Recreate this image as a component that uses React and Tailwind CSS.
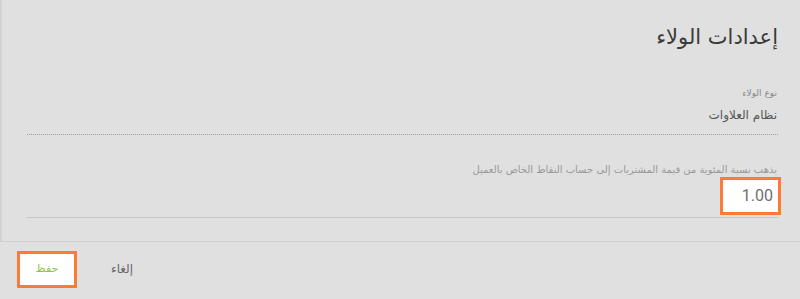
import React from 'react'

const font = { fontFamily: '"DejaVu Sans", "Noto Sans", sans-serif' }

export default function App() {
  return (
    <div dir="rtl" className="w-[800px] h-[299px] bg-[#e0e0e0] text-[#333] flex flex-col overflow-hidden" style={font}>
      {/* Form body */}
      <div className="h-[241px] border-l-2 border-[#d2d2d2] pr-[22px] pl-[25px] pt-[22px]">
        <h2 className="text-[21px] leading-[30px] text-[#3a3a3a] mb-[34px]">إعدادات الولاء</h2>

        <div className="pr-[1px] pb-[9px] border-b border-dotted border-[#9a9a9a]">
          <div className="text-[9px] leading-[14px] text-[#888]">نوع الولاء</div>
          <div className="text-[12px] leading-[20px] text-[#555] mt-[5px]">نظام العلاوات</div>
        </div>

        <div className="mt-[29px] pr-[1px] border-b border-[#c4c4c4] pb-[2px]">
          <div className="text-[10px] leading-[12px] text-[#999]">يذهب نسبة المئوية من قيمة المشتريات إلى حساب النقاط الخاص بالعميل</div>
          <div className="flex mt-[1px]">
            <div
              className="w-[61px] h-[38px] -mr-[4px] bg-white border-[3px] border-[#ff7a36] flex items-center justify-end pr-[5px] text-[16px] text-[#707070]"
              dir="ltr"
              style={{ fontFamily: 'Roboto, "Liberation Sans", sans-serif' }}
            >
              1.00
            </div>
          </div>
        </div>
      </div>

      {/* Footer */}
      <div className="flex-1 border-t border-[#d0d0d0] flex items-center justify-end gap-[34px] pl-[17px] pb-[3px]">
        <button className="text-[12px] text-[#666] bg-transparent">إلغاء</button>
        <button className="w-[60px] h-[37px] bg-white border-[3px] border-[#ff7a36] text-[11px] text-[#8bc34a]">حفظ</button>
      </div>
    </div>
  )
}
